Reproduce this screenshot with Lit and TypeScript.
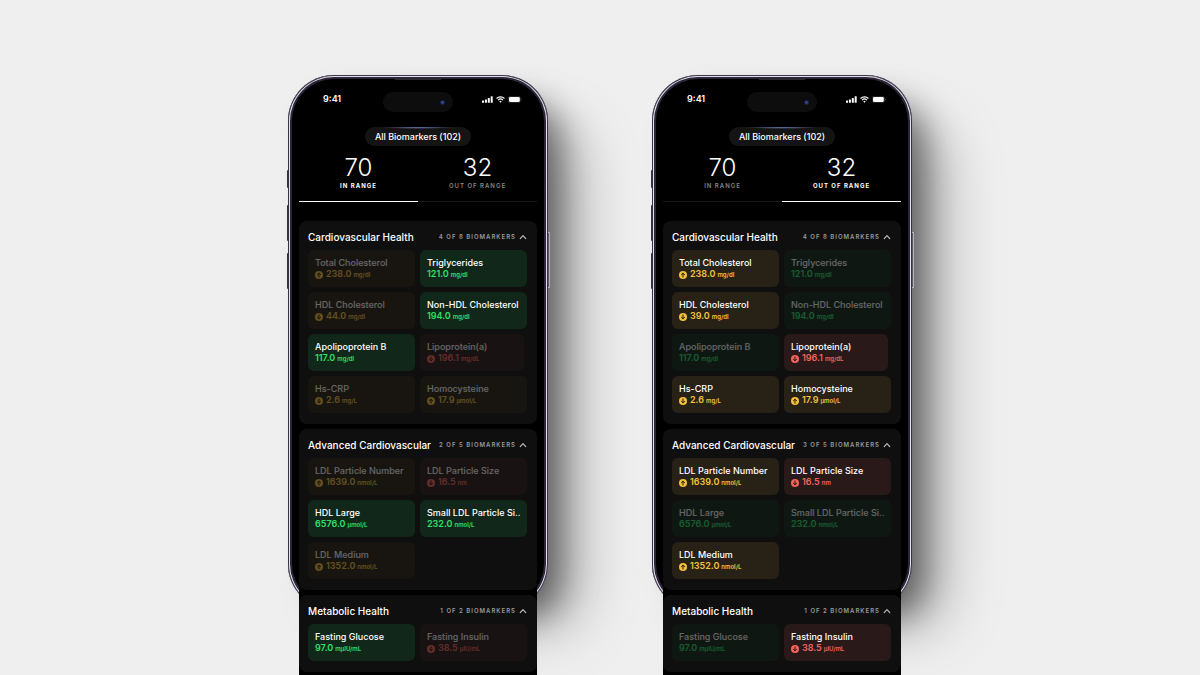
import { LitElement, html, css, svg, nothing } from "lit";
import { customElement, property, state } from "lit/decorators.js";
import { classMap } from "lit/directives/class-map.js";

type Tone = "good" | "warn" | "bad";
type View = "in" | "out";

interface Marker {
  name: string;
  value: string;
  unit: string;
  tone: Tone;
  arrow?: "up" | "down";
  narrow?: boolean;
}

interface Group {
  title: string;
  count: string;
  markers: Marker[];
}

const groupsFor = (view: View): Group[] => [
  {
    title: "Cardiovascular Health",
    count: "4 OF 8 BIOMARKERS",
    markers: [
      { name: "Total Cholesterol", value: "238.0", unit: "mg/dl", tone: "warn", arrow: "up" },
      { name: "Triglycerides", value: "121.0", unit: "mg/dl", tone: "good" },
      { name: "HDL Cholesterol", value: view === "in" ? "44.0" : "39.0", unit: "mg/dl", tone: "warn", arrow: "down" },
      { name: "Non-HDL Cholesterol", value: "194.0", unit: "mg/dl", tone: "good" },
      { name: "Apolipoprotein B", value: "117.0", unit: "mg/dl", tone: "good" },
      { name: "Lipoprotein(a)", value: "196.1", unit: "mg/dL", tone: "bad", arrow: "down", narrow: true },
      { name: "Hs-CRP", value: "2.6", unit: "mg/L", tone: "warn", arrow: "down" },
      { name: "Homocysteine", value: "17.9", unit: "µmol/L", tone: "warn", arrow: "up" },
    ],
  },
  {
    title: "Advanced Cardiovascular",
    count: view === "in" ? "2 OF 5 BIOMARKERS" : "3 OF 5 BIOMARKERS",
    markers: [
      { name: "LDL Particle Number", value: "1639.0", unit: "nmol/L", tone: "warn", arrow: "up" },
      { name: "LDL Particle Size", value: "16.5", unit: "nm", tone: "bad", arrow: "down" },
      { name: "HDL Large", value: "6576.0", unit: "µmol/L", tone: "good" },
      { name: "Small LDL Particle Si..", value: "232.0", unit: "nmol/L", tone: "good" },
      { name: "LDL Medium", value: "1352.0", unit: "nmol/L", tone: "warn", arrow: "up" },
    ],
  },
  {
    title: "Metabolic Health",
    count: "1 OF 2 BIOMARKERS",
    markers: [
      { name: "Fasting Glucose", value: "97.0", unit: "mµIU/mL", tone: "good" },
      { name: "Fasting Insulin", value: "38.5", unit: "µIU/mL", tone: "bad", arrow: "down" },
    ],
  },
];

@customElement("biomarker-tile")
class BiomarkerTile extends LitElement {
  @property({ attribute: false }) marker!: Marker;
  @property({ type: Boolean }) dim = false;

  static styles = css`
    :host {
      display: block;
      min-width: 0;
    }
    .tile {
      box-sizing: border-box;
      height: 37px;
      padding: 7px 7px 0;
      border-radius: 6px;
      font-size: 9px;
      line-height: 12px;
      white-space: nowrap;
    }
    .narrow {
      margin-right: 3px;
    }
    .name {
      color: #fff;
      font-weight: 500;
    }
    .reading {
      display: flex;
      align-items: center;
      gap: 3px;
      height: 11px;
      font-weight: 600;
    }
    .amount {
      display: flex;
      align-items: baseline;
      gap: 2px;
    }
    .unit {
      font-size: 6px;
      font-weight: 600;
    }
    .arrow {
      width: 8px;
      height: 8px;
      flex: none;
    }
    .good {
      background: #10271a;
    }
    .good .reading {
      color: #2fe06c;
    }
    .warn {
      background: #282116;
    }
    .warn .reading {
      color: #f4c13d;
    }
    .bad {
      background: #2a1919;
    }
    .bad .reading {
      color: #f4645c;
    }
    .dim {
      opacity: 0.36;
    }
  `;

  render() {
    const m = this.marker;
    return html`
      <div class=${classMap({ tile: true, [m.tone]: true, dim: this.dim, narrow: !!m.narrow })}>
        <div class="name">${m.name}</div>
        <div class="reading">
          ${m.arrow
            ? html`<svg class="arrow" viewBox="0 0 16 16" aria-hidden="true">
                <circle cx="8" cy="8" r="8" fill="currentColor" />
                ${m.arrow === "up"
                  ? svg`<path d="M8 12.2V4.4M4.8 7.6 8 4.4l3.2 3.2" fill="none" stroke="#1c1610" stroke-width="2" stroke-linecap="round" stroke-linejoin="round" />`
                  : svg`<path d="M8 3.8v7.8M4.8 8.4 8 11.6l3.2-3.2" fill="none" stroke="#1c1610" stroke-width="2" stroke-linecap="round" stroke-linejoin="round" />`}
              </svg>`
            : nothing}
          <span class="amount"><span>${m.value}</span><span class="unit">${m.unit}</span></span>
        </div>
      </div>
    `;
  }
}

@customElement("biomarker-group")
class BiomarkerGroup extends LitElement {
  @property({ attribute: false }) group!: Group;
  @property() view: View = "in";
  @state() private open = true;

  static styles = css`
    :host {
      display: block;
    }
    .card {
      background: #0f0f0f;
      border-radius: 8px;
      padding: 0 10px 11px 9px;
    }
    .head {
      display: flex;
      align-items: center;
      justify-content: space-between;
      box-sizing: border-box;
      height: 29px;
      padding-top: 3px;
    }
    .title {
      margin: 0;
      font-size: 10px;
      line-height: 14px;
      font-weight: 500;
      color: #fff;
    }
    .toggle {
      display: flex;
      align-items: center;
      gap: 3px;
      border: 0;
      padding: 0;
      margin: 0;
      background: none;
      font: inherit;
      font-size: 6px;
      line-height: 10px;
      font-weight: 600;
      letter-spacing: 1px;
      color: #9a9a9a;
      cursor: pointer;
    }
    .chevron {
      width: 8px;
      height: 6px;
    }
    .closed .chevron {
      transform: rotate(180deg);
    }
    .tiles {
      list-style: none;
      margin: 0;
      padding: 0;
      display: grid;
      grid-template-columns: repeat(2, minmax(0, 1fr));
      gap: 5px;
    }
  `;

  render() {
    return html`
      <section class="card ${this.open ? "" : "closed"}">
        <div class="head">
          <h2 class="title">${this.group.title}</h2>
          <button class="toggle" aria-expanded=${this.open} @click=${() => (this.open = !this.open)}>
            ${this.group.count}
            <svg class="chevron" viewBox="0 0 8 6" aria-hidden="true">
              <path d="M1.2 4.6 4 1.6l2.8 3" fill="none" stroke="#c4c4c4" stroke-width="1.1" stroke-linecap="round" stroke-linejoin="round" />
            </svg>
          </button>
        </div>
        ${this.open
          ? html`<ul class="tiles">
              ${this.group.markers.map(
                (m) => html`<li>
                  <biomarker-tile .marker=${m} ?dim=${(m.tone === "good") !== (this.view === "in")}></biomarker-tile>
                </li>`,
              )}
            </ul>`
          : nothing}
      </section>
    `;
  }
}

@customElement("phone-mockup")
class PhoneMockup extends LitElement {
  @property() view: View = "in";

  static styles = css`
    :host {
      display: block;
      position: relative;
      width: 260px;
    }
    .frame {
      position: absolute;
      inset: 0 0 auto;
      height: 535px;
      border-radius: 46px;
      background: #000;
      box-shadow:
        inset 0 0 0 1px #3a3447,
        inset 0 0 0 2px #e4e1ee,
        inset 0 0 0 4px #2c2638,
        22px 18px 34px -10px rgba(0, 0, 0, 0.5),
        52px 36px 60px -20px rgba(0, 0, 0, 0.26);
    }
    .speaker {
      position: absolute;
      top: 4px;
      left: 107px;
      width: 46px;
      height: 1px;
      background: #2a2a2d;
    }
    .key {
      position: absolute;
      left: -1px;
      width: 2px;
      background: #35323f;
      border-radius: 1px 0 0 1px;
    }
    .mute {
      top: 95px;
      height: 18px;
    }
    .up {
      top: 130px;
      height: 36px;
    }
    .down {
      top: 178px;
      height: 36px;
    }
    .power {
      left: auto;
      right: -2px;
      top: 157px;
      height: 56px;
      box-sizing: border-box;
      background: #5d5965;
      border: 1px solid #b4b3b9;
      border-width: 1px 1px 1px 0;
      border-radius: 0 1px 1px 0;
    }
    .screen {
      position: relative;
      margin: 0 11px;
      padding-top: 14px;
    }
    .surface {
      position: absolute;
      inset: 146px 0 0;
      background: #000;
    }
    .content {
      position: relative;
      display: flex;
      flex-direction: column;
      align-items: center;
    }
    .status {
      display: grid;
      grid-template-columns: 1fr auto 1fr;
      align-items: center;
      align-self: stretch;
      height: 26px;
    }
    .time {
      padding-left: 24px;
      padding-bottom: 6px;
      font-size: 9px;
      line-height: 12px;
      font-weight: 600;
      color: #fff;
    }
    .island {
      display: flex;
      align-items: center;
      justify-content: flex-end;
      box-sizing: border-box;
      width: 70px;
      height: 20px;
      padding-right: 8px;
      border-radius: 10px;
      background: #0d0d0e;
    }
    .lens {
      width: 5px;
      height: 5px;
      border-radius: 50%;
      background: radial-gradient(circle, #3f58b4 0, #1b2350 55%, #0d0d16 100%);
    }
    .signals {
      display: flex;
      align-items: center;
      justify-content: flex-end;
      gap: 3px;
      padding: 0 15px 6px 0;
    }
    .bars {
      width: 11px;
      height: 7px;
    }
    .wifi {
      width: 9px;
      height: 7px;
    }
    .battery {
      width: 14px;
      height: 7px;
    }
    .filter {
      margin: 12px 0 0;
      border: 0;
      padding: 0 10px;
      height: 19px;
      border-radius: 10px;
      background:
        radial-gradient(ellipse 36px 2px at 50% 0, #6a80bd, transparent),
        #141414;
      font: inherit;
      font-size: 9px;
      font-weight: 500;
      color: #fff;
      cursor: pointer;
    }
    .tabs {
      display: grid;
      grid-template-columns: 1fr 1fr;
      align-self: stretch;
      margin-top: 8px;
    }
    .tab {
      display: flex;
      flex-direction: column;
      align-items: center;
      border: 0;
      border-bottom: 1px solid #161616;
      padding: 0 0 10px;
      background: none;
      font: inherit;
      color: #fff;
      cursor: pointer;
    }
    .selected {
      border-bottom-color: #fff;
    }
    .total {
      font-size: 24px;
      line-height: 27px;
      font-weight: 300;
    }
    .label {
      font-size: 6px;
      line-height: 10px;
      font-weight: 600;
      letter-spacing: 1px;
      color: #868686;
    }
    .selected .label {
      font-weight: 700;
      color: #fff;
    }
    .groups {
      display: flex;
      flex-direction: column;
      align-self: stretch;
      gap: 5px;
      padding: 19px 0 40px;
    }
  `;

  private tab(view: View, total: string, label: string) {
    const on = this.view === view;
    return html`
      <button
        role="tab"
        aria-selected=${on}
        class=${classMap({ tab: true, selected: on })}
        @click=${() => (this.view = view)}
      >
        <span class="total">${total}</span>
        <span class="label">${label}</span>
      </button>
    `;
  }

  render() {
    return html`
      <div class="frame">
        <span class="speaker"></span>
        <span class="key mute"></span>
        <span class="key up"></span>
        <span class="key down"></span>
        <span class="key power"></span>
      </div>
      <div class="screen">
        <div class="surface"></div>
        <div class="content">
          <div class="status">
            <span class="time">9:41</span>
            <span class="island"><span class="lens"></span></span>
            <span class="signals">
              <svg class="bars" viewBox="0 0 11 7" fill="#fff" aria-hidden="true">
                <rect x="0" y="4.5" width="2" height="2.3" rx=".5" />
                <rect x="2.9" y="3.4" width="2" height="3.4" rx=".5" />
                <rect x="5.8" y="1.9" width="2" height="4.9" rx=".5" />
                <rect x="8.7" y="0.3" width="2" height="6.5" rx=".5" />
              </svg>
              <svg class="wifi" viewBox="0 0 9 7" fill="none" stroke="#fff" aria-hidden="true">
                <path d="M.6 2.5a5.6 5.6 0 0 1 7.8 0M2.1 4.1a3.4 3.4 0 0 1 4.8 0" stroke-width="1.1" />
                <path d="M4.5 6.7 3.3 5.4a1.8 1.8 0 0 1 2.4 0z" fill="#fff" stroke="none" />
              </svg>
              <svg class="battery" viewBox="0 0 14 7" aria-hidden="true">
                <rect x=".3" y=".3" width="12.2" height="6.4" rx="1.9" fill="none" stroke="#555" stroke-width=".5" />
                <rect x="1" y="1" width="10.8" height="5" rx="1.3" fill="#fff" />
                <path d="M13.2 2.5v2c.6-.3.6-1.7 0-2z" fill="#777" />
              </svg>
            </span>
          </div>
          <button class="filter">All Biomarkers (102)</button>
          <div class="tabs" role="tablist">
            ${this.tab("in", "70", "IN RANGE")} ${this.tab("out", "32", "OUT OF RANGE")}
          </div>
          <div class="groups">
            ${groupsFor(this.view).map(
              (g) => html`<biomarker-group .group=${g} view=${this.view}></biomarker-group>`,
            )}
          </div>
        </div>
      </div>
    `;
  }
}

@customElement("app-root")
class AppRoot extends LitElement {
  static styles = css`
    :host {
      display: block;
      font-family: Inter, "Liberation Sans", sans-serif;
    }
    .stage {
      display: flex;
      justify-content: center;
      align-items: flex-start;
      gap: 104px;
      box-sizing: border-box;
      height: 100vh;
      padding-top: 75px;
      overflow: hidden;
      background: #efefef;
    }
  `;

  render() {
    return html`
      <main class="stage">
        <phone-mockup view="in"></phone-mockup>
        <phone-mockup view="out"></phone-mockup>
      </main>
    `;
  }
}
